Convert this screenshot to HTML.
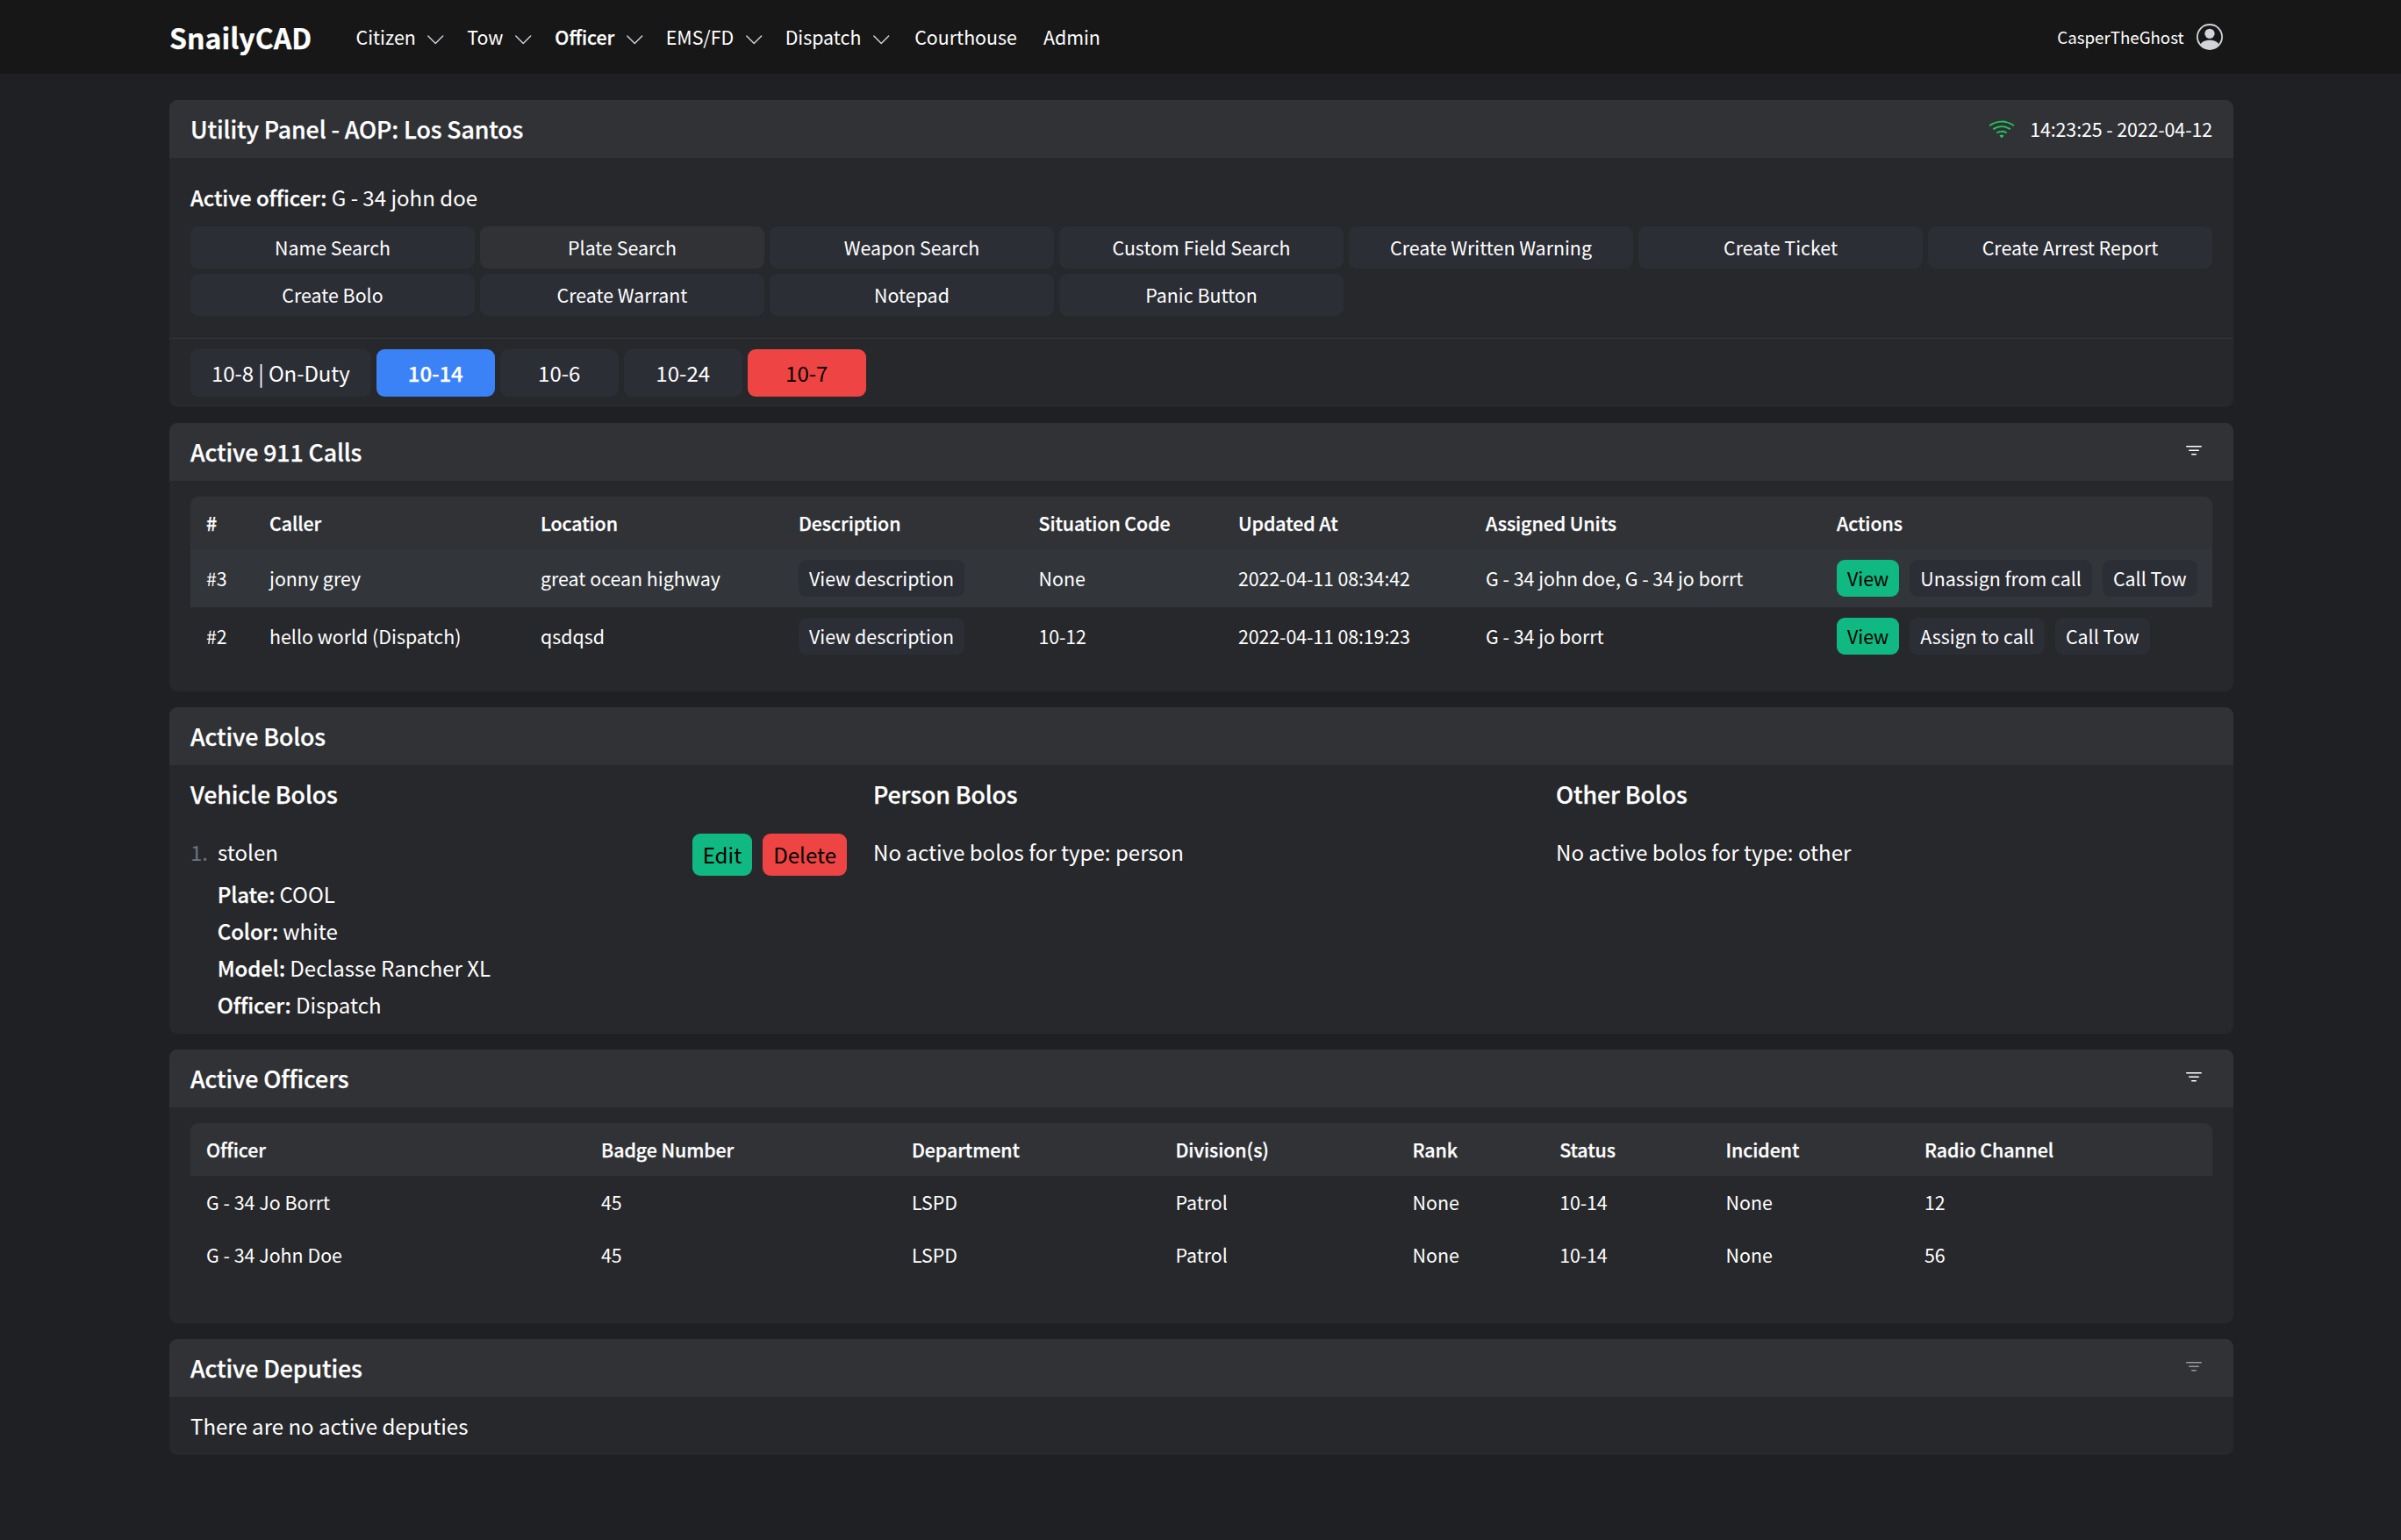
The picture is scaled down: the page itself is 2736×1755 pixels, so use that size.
<!DOCTYPE html>
<html lang="en">
<head>
<meta charset="utf-8">
<title>SnailyCAD - Officer Dashboard</title>
<style>
html{font-size:24px;-webkit-text-size-adjust:100%}
*,*::before,*::after{box-sizing:border-box;margin:0;padding:0;border:0 solid #3a3b40}
body{width:2736px;height:1755px;overflow:hidden;background:#1f2023;color:#fff;
 font-family:"Noto Sans CJK SC","Noto Sans CJK JP","Liberation Sans",sans-serif;
 font-size:.891rem;line-height:1.5rem;font-weight:400}
ul,ol{list-style:none}
table{border-collapse:collapse;border-spacing:0}
button{font:inherit;color:inherit;background:none;cursor:pointer}
a{color:inherit;text-decoration:none}
svg{display:block;fill:currentColor;flex:none}
.sb{font-weight:500;-webkit-text-stroke:.25px currentColor;letter-spacing:-.004em}
.b{font-weight:700;-webkit-text-stroke:.25px currentColor}
.dg{letter-spacing:-.0045em}
.lg{font-size:1.00238rem;line-height:1.75rem}
.xl{font-size:1.11375rem;line-height:1.75rem}
/* nav */
nav{background:#171717;height:3.5rem}
.wrap{max-width:100rem;margin:0 auto;padding:0 calc(1rem - 1px) 0 calc(1rem + 1px)}
.navrow{display:flex;align-items:center;justify-content:space-between;height:3.5rem}
.navleft{display:flex;align-items:center}
.brand{font-size:1.3365rem;line-height:2rem;color:#fff}
.menu{display:flex;align-items:center;margin-left:calc(1.75rem - .7px)}
.menu>*+*{margin-left:.25rem}
.mi{display:flex;align-items:center;padding:.25rem .375rem;color:#fff;line-height:1.5rem}
.mi.act{color:#fff}
.mi .chev{margin-left:.47rem;margin-top:.25rem;color:#d1d5db}
.mi .chev svg{width:.9375rem;height:.9375rem}
.ml{padding:.25rem .5rem;color:#fff}
.user{display:flex;align-items:center;padding:.25rem .5rem;color:#fff}
.user .nm{margin-right:.6rem;font-size:.77963rem;line-height:1.25rem}
.user svg{width:1.25rem;height:1.25rem;color:#d1d5db}
/* cards */
main.wrap{margin-top:1.25rem}
.card{background:#27282b;border-radius:.375rem;overflow:hidden;margin-top:.75rem}
.card.first{margin-top:0}
.chead{display:flex;align-items:center;justify-content:space-between;background:#303236;padding:.5rem 1rem;height:2.75rem}
.chead h3{font-size:1.11375rem;line-height:1.75rem}
.fbtn{padding:.375rem;color:#fff;position:relative;top:-1.5px}
.fbtn svg{width:1rem;height:1rem}
.fbtn.dis{opacity:.5}
.btn{display:inline-block;background:#2c2e36;border-radius:.375rem;padding:.25rem 1rem;text-align:center;color:#fff;white-space:nowrap;line-height:1.5rem}
.btn.xs{padding:.125rem .5rem}
.btn.green{background:#10b981;color:#000}
.btn.red{background:#ef4444;color:#000}
.btn.blue{background:#3b82f6;color:#fff}
.btn.hov{background:#303236}
/* utility */
.ubody{padding:1rem 1rem calc(1rem + 1px)}
.ubody p{height:1.75rem}
.ugrid{display:grid;grid-template-columns:repeat(7,1fr);gap:.25rem;margin-top:.5rem}
.ugrid .btn{display:block}
.status{display:flex;border-top:1px solid #34353a;padding:.5rem 1rem}
.status li+li{margin-left:.25rem}
.status .btn{min-width:5.625rem;line-height:1.75rem;display:block}
.clock{display:flex;align-items:center}
.clock svg{width:1.25rem;height:1.25rem;color:#22c55e;margin-right:.72rem}
/* tables */
.tw{padding:0 1rem;margin-top:.75rem}
table.tb{width:100%;table-layout:fixed;white-space:nowrap}
.tb th{background:#303236;text-align:left;padding:.5rem .75rem;height:2.5rem}
.tb th:first-child{border-top-left-radius:.375rem}
.tb th:last-child{border-top-right-radius:.375rem}
.tb td{padding:.5rem .75rem;text-align:left}
.tb tr.hl td{background:#32363a}
.tb .btn+.btn{margin-left:.5rem}
/* bolos */
.bgrid{display:grid;grid-template-columns:repeat(3,1fr);column-gap:1.25rem;padding:0 1rem}
.bgrid h1{margin:.5rem 0}
.bgrid ul{padding:.5rem 0}
.brow{display:flex;justify-content:space-between;height:2rem}
.brow .num{color:#6b7280;margin-right:.46rem}
.brow .acts .btn+.btn{margin-left:.5rem}
.brow .btn{line-height:1.75rem}
.bdet{padding-left:1.28rem}
.bdet p{height:1.75rem}
</style>
</head>
<body>
<nav>
 <div class="wrap"><div class="navrow">
  <div class="navleft">
   <h1 class="brand b">SnailyCAD</h1>
   <div class="menu">
    <button class="mi">Citizen<span class="chev"><svg viewBox="0 0 16 16"><path fill-rule="evenodd" d="M1.646 4.646a.5.5 0 0 1 .708 0L8 10.293l5.646-5.647a.5.5 0 0 1 .708.708l-6 6a.5.5 0 0 1-.708 0l-6-6a.5.5 0 0 1 0-.708z"/></svg></span></button>
    <button class="mi" style="margin-left:calc(.25rem + .7px)">Tow<span class="chev"><svg viewBox="0 0 16 16"><path fill-rule="evenodd" d="M1.646 4.646a.5.5 0 0 1 .708 0L8 10.293l5.646-5.647a.5.5 0 0 1 .708.708l-6 6a.5.5 0 0 1-.708 0l-6-6a.5.5 0 0 1 0-.708z"/></svg></span></button>
    <button class="mi act sb" style="letter-spacing:0;margin-left:calc(.25rem + 1px)">Officer<span class="chev"><svg viewBox="0 0 16 16"><path fill-rule="evenodd" d="M1.646 4.646a.5.5 0 0 1 .708 0L8 10.293l5.646-5.647a.5.5 0 0 1 .708.708l-6 6a.5.5 0 0 1-.708 0l-6-6a.5.5 0 0 1 0-.708z"/></svg></span></button>
    <button class="mi" style="margin-left:calc(.25rem + .6px)">EMS/FD<span class="chev"><svg viewBox="0 0 16 16"><path fill-rule="evenodd" d="M1.646 4.646a.5.5 0 0 1 .708 0L8 10.293l5.646-5.647a.5.5 0 0 1 .708.708l-6 6a.5.5 0 0 1-.708 0l-6-6a.5.5 0 0 1 0-.708z"/></svg></span></button>
    <button class="mi" style="margin-left:calc(.25rem + .6px)">Dispatch<span class="chev"><svg viewBox="0 0 16 16"><path fill-rule="evenodd" d="M1.646 4.646a.5.5 0 0 1 .708 0L8 10.293l5.646-5.647a.5.5 0 0 1 .708.708l-6 6a.5.5 0 0 1-.708 0l-6-6a.5.5 0 0 1 0-.708z"/></svg></span></button>
    <a class="ml">Courthouse</a>
    <a class="ml">Admin</a>
   </div>
  </div>
  <button class="user"><span class="nm">CasperTheGhost</span><svg viewBox="0 0 16 16"><path d="M11 6a3 3 0 1 1-6 0 3 3 0 0 1 6 0z"/><path fill-rule="evenodd" d="M0 8a8 8 0 1 1 16 0A8 8 0 0 1 0 8zm8-7a7 7 0 0 0-5.468 11.37C3.242 11.226 4.805 10 8 10s4.757 1.225 5.468 2.37A7 7 0 0 0 8 1z"/></svg></button>
 </div></div>
</nav>
<main class="wrap">

<section class="card first">
 <header class="chead">
  <h3 class="sb">Utility Panel - AOP: Los Santos</h3>
  <div class="clock"><svg viewBox="0 0 16 16"><path d="M15.384 6.115a.485.485 0 0 0-.047-.736A12.444 12.444 0 0 0 8 3C5.259 3 2.723 3.882.663 5.379a.485.485 0 0 0-.048.736.518.518 0 0 0 .668.05A11.448 11.448 0 0 1 8 4c2.507 0 4.827.802 6.716 2.164.205.148.49.13.668-.049z"/><path d="M13.229 8.271a.482.482 0 0 0-.063-.745A9.455 9.455 0 0 0 8 6c-1.905 0-3.68.56-5.166 1.526a.48.48 0 0 0-.063.745.525.525 0 0 0 .652.065A8.46 8.46 0 0 1 8 7a8.46 8.46 0 0 1 4.576 1.336c.206.132.48.108.653-.065zm-2.183 2.183c.226-.226.185-.605-.1-.75A6.473 6.473 0 0 0 8 9c-1.06 0-2.062.254-2.946.704-.285.145-.326.524-.1.75l.015.015c.16.16.407.19.611.09A5.478 5.478 0 0 1 8 10c.868 0 1.69.201 2.42.56.203.1.45.07.61-.091l.016-.015zM9.06 12.44c.196-.196.198-.52-.04-.66A1.99 1.99 0 0 0 8 11.5a1.99 1.99 0 0 0-1.02.28c-.238.14-.236.464-.04.66l.706.706a.5.5 0 0 0 .707 0l.707-.707z"/></svg><span class="dg">14:23:25 - 2022-04-12</span></div>
 </header>
 <div class="ubody">
  <p class="lg"><span class="sb">Active officer: </span>G - 34 john doe</p>
  <div class="ugrid">
   <button class="btn">Name Search</button>
   <button class="btn hov">Plate Search</button>
   <button class="btn">Weapon Search</button>
   <button class="btn">Custom Field Search</button>
   <button class="btn">Create Written Warning</button>
   <button class="btn">Create Ticket</button>
   <button class="btn">Create Arrest Report</button>
   <button class="btn">Create Bolo</button>
   <button class="btn">Create Warrant</button>
   <button class="btn">Notepad</button>
   <button class="btn">Panic Button</button>
  </div>
 </div>
 <ul class="status lg">
  <li><button class="btn dg">10-8 | On-Duty</button></li>
  <li><button class="btn blue sb">10-14</button></li>
  <li><button class="btn">10-6</button></li>
  <li><button class="btn">10-24</button></li>
  <li><button class="btn red">10-7</button></li>
 </ul>
</section>

<section class="card">
 <header class="chead">
  <h3 class="sb">Active 911 Calls</h3>
  <button class="fbtn"><svg viewBox="0 0 16 16"><path d="M6 10.5a.5.5 0 0 1 .5-.5h3a.5.5 0 0 1 0 1h-3a.5.5 0 0 1-.5-.5zm-2-3a.5.5 0 0 1 .5-.5h7a.5.5 0 0 1 0 1h-7a.5.5 0 0 1-.5-.5zm-2-3a.5.5 0 0 1 .5-.5h11a.5.5 0 0 1 0 1h-11a.5.5 0 0 1-.5-.5z"/></svg></button>
 </header>
 <div class="tw" style="padding-bottom:1.25rem">
  <table class="tb">
   <colgroup><col style="width:72px"><col style="width:309px"><col style="width:294px"><col style="width:273.5px"><col style="width:227.5px"><col style="width:282px"><col style="width:400px"><col></colgroup>
   <thead><tr><th class="sb">#</th><th class="sb">Caller</th><th class="sb">Location</th><th class="sb">Description</th><th class="sb">Situation Code</th><th class="sb">Updated At</th><th class="sb">Assigned Units</th><th class="sb">Actions</th></tr></thead>
   <tbody>
    <tr class="hl"><td>#3</td><td>jonny grey</td><td>great ocean highway</td><td><button class="btn xs">View description</button></td><td>None</td><td class="dg">2022-04-11 08:34:42</td><td>G - 34 john doe, G - 34 jo borrt</td><td><button class="btn xs green">View</button><button class="btn xs">Unassign from call</button><button class="btn xs">Call Tow</button></td></tr>
    <tr><td>#2</td><td>hello world (Dispatch)</td><td>qsdqsd</td><td><button class="btn xs">View description</button></td><td class="dg">10-12</td><td class="dg">2022-04-11 08:19:23</td><td>G - 34 jo borrt</td><td><button class="btn xs green">View</button><button class="btn xs">Assign to call</button><button class="btn xs">Call Tow</button></td></tr>
   </tbody>
  </table>
 </div>
</section>

<section class="card">
 <header class="chead"><h3 class="sb">Active Bolos</h3></header>
 <div class="bgrid lg">
  <div>
   <h1 class="xl sb">Vehicle Bolos</h1>
   <ul>
    <li>
     <div class="brow"><div><span class="num">1.</span><span>stolen</span></div><div class="acts"><button class="btn xs green">Edit</button><button class="btn xs red">Delete</button></div></div>
     <div class="bdet">
      <p><span class="sb">Plate: </span>COOL</p>
      <p><span class="sb">Color: </span>white</p>
      <p><span class="sb">Model: </span>Declasse Rancher XL</p>
      <p><span class="sb">Officer: </span>Dispatch</p>
     </div>
    </li>
   </ul>
  </div>
  <div>
   <h1 class="xl sb">Person Bolos</h1>
   <ul><li><p>No active bolos for type: person</p></li></ul>
  </div>
  <div>
   <h1 class="xl sb">Other Bolos</h1>
   <ul><li><p>No active bolos for type: other</p></li></ul>
  </div>
 </div>
</section>

<section class="card">
 <header class="chead">
  <h3 class="sb">Active Officers</h3>
  <button class="fbtn"><svg viewBox="0 0 16 16"><path d="M6 10.5a.5.5 0 0 1 .5-.5h3a.5.5 0 0 1 0 1h-3a.5.5 0 0 1-.5-.5zm-2-3a.5.5 0 0 1 .5-.5h7a.5.5 0 0 1 0 1h-7a.5.5 0 0 1-.5-.5zm-2-3a.5.5 0 0 1 .5-.5h11a.5.5 0 0 1 0 1h-11a.5.5 0 0 1-.5-.5z"/></svg></button>
 </header>
 <div class="tw" style="padding-bottom:2rem">
  <table class="tb">
   <colgroup><col style="width:450px"><col style="width:354px"><col style="width:300.5px"><col style="width:270px"><col style="width:167.7px"><col style="width:189.3px"><col style="width:226.5px"><col></colgroup>
   <thead><tr><th class="sb">Officer</th><th class="sb">Badge Number</th><th class="sb">Department</th><th class="sb">Division(s)</th><th class="sb">Rank</th><th class="sb">Status</th><th class="sb">Incident</th><th class="sb">Radio Channel</th></tr></thead>
   <tbody>
    <tr><td>G - 34 Jo Borrt</td><td class="dg">45</td><td>LSPD</td><td>Patrol</td><td>None</td><td class="dg">10-14</td><td>None</td><td>12</td></tr>
    <tr><td>G - 34 John Doe</td><td class="dg">45</td><td>LSPD</td><td>Patrol</td><td>None</td><td class="dg">10-14</td><td>None</td><td>56</td></tr>
   </tbody>
  </table>
 </div>
</section>

<section class="card">
 <header class="chead">
  <h3 class="sb">Active Deputies</h3>
  <button class="fbtn dis"><svg viewBox="0 0 16 16"><path d="M6 10.5a.5.5 0 0 1 .5-.5h3a.5.5 0 0 1 0 1h-3a.5.5 0 0 1-.5-.5zm-2-3a.5.5 0 0 1 .5-.5h7a.5.5 0 0 1 0 1h-7a.5.5 0 0 1-.5-.5zm-2-3a.5.5 0 0 1 .5-.5h11a.5.5 0 0 1 0 1h-11a.5.5 0 0 1-.5-.5z"/></svg></button>
 </header>
 <p class="lg" style="padding:.5rem 1rem">There are no active deputies</p>
</section>

</main>
</body>
</html>
